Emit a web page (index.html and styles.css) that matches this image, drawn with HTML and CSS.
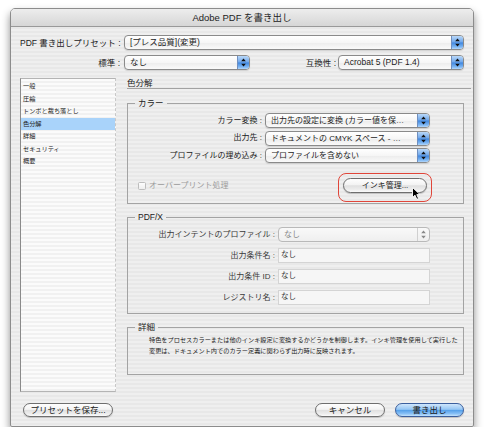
FILE: index.html
```html
<!DOCTYPE html>
<html lang="ja">
<head>
<meta charset="utf-8">
<title>Adobe PDF を書き出し</title>
<link rel="stylesheet" href="styles.css">
</head>
<body>
<div class="window">
  <div class="titlebar">Adobe PDF を書き出し</div>
  <div class="body">
    <div class="row top-row">
      <span class="lbl lbl-top">PDF 書き出しプリセット :</span>
      <div class="popup popup-wide"><span class="txt">[プレス品質](変更)</span><span class="cap"><svg width="5" height="9" viewBox="0 0 5 9"><path d="M2.5 0.5L4.8 3.3H0.2Z M2.5 8.5L4.8 5.7H0.2Z" fill="#111"/></svg></span></div>
    </div>
    <div class="row top-row row2">
      <span class="lbl lbl-top">標準 :</span>
      <div class="popup popup-short"><span class="txt">なし</span><span class="cap"><svg width="5" height="9" viewBox="0 0 5 9"><path d="M2.5 0.5L4.8 3.3H0.2Z M2.5 8.5L4.8 5.7H0.2Z" fill="#111"/></svg></span></div>
      <span class="lbl lbl-compat">互換性 :</span>
      <div class="popup popup-short"><span class="txt">Acrobat 5 (PDF 1.4)</span><span class="cap"><svg width="5" height="9" viewBox="0 0 5 9"><path d="M2.5 0.5L4.8 3.3H0.2Z M2.5 8.5L4.8 5.7H0.2Z" fill="#111"/></svg></span></div>
    </div>

    <div class="main">
      <ul class="sidelist">
        <li>一般</li>
        <li>圧縮</li>
        <li>トンボと裁ち落とし</li>
        <li class="selected">色分解</li>
        <li>詳細</li>
        <li>セキュリティ</li>
        <li>概要</li>
      </ul>

      <div class="panel">
        <div class="heading">色分解</div>

        <fieldset class="group">
          <legend>カラー</legend>
          <div class="group-body color-body">
            <div class="frow">
              <span class="flbl">カラー変換 :</span>
              <div class="popup popup-color"><span class="txt">出力先の設定に変換 (カラー値を保…</span><span class="cap"><svg width="5" height="9" viewBox="0 0 5 9"><path d="M2.5 0.5L4.8 3.3H0.2Z M2.5 8.5L4.8 5.7H0.2Z" fill="#111"/></svg></span></div>
            </div>
            <div class="frow">
              <span class="flbl">出力先 :</span>
              <div class="popup popup-color"><span class="txt">ドキュメントの CMYK スペース - …</span><span class="cap"><svg width="5" height="9" viewBox="0 0 5 9"><path d="M2.5 0.5L4.8 3.3H0.2Z M2.5 8.5L4.8 5.7H0.2Z" fill="#111"/></svg></span></div>
            </div>
            <div class="frow">
              <span class="flbl">プロファイルの埋め込み :</span>
              <div class="popup popup-color"><span class="txt">プロファイルを含めない</span><span class="cap"><svg width="5" height="9" viewBox="0 0 5 9"><path d="M2.5 0.5L4.8 3.3H0.2Z M2.5 8.5L4.8 5.7H0.2Z" fill="#111"/></svg></span></div>
            </div>
            <div class="optrow">
              <label class="check disabled"><span class="box"></span>オーバープリント処理</label>
              <div class="btn btn-ink">インキ管理...
                <span class="ring"></span>
                <svg class="cursor" width="9" height="13" viewBox="0 0 9 13"><path d="M0.5 0.5 L0.5 10.5 L3 8.2 L4.8 12.3 L6.5 11.5 L4.8 7.6 L8 7.6 Z" fill="#000" stroke="#fff" stroke-width="0.9" stroke-linejoin="round"/></svg>
              </div>
            </div>
          </div>
        </fieldset>

        <fieldset class="group">
          <legend>PDF/X</legend>
          <div class="group-body pdfx-body">
            <div class="frow">
              <span class="flbl">出力インテントのプロファイル :</span>
              <div class="popup popup-pdfx disabled"><span class="txt">なし</span><span class="cap"><svg width="5" height="9" viewBox="0 0 5 9"><path d="M2.5 0.5L4.8 3.3H0.2Z M2.5 8.5L4.8 5.7H0.2Z" fill="#8a8a8a"/></svg></span></div>
            </div>
            <div class="frow">
              <span class="flbl">出力条件名 :</span>
              <div class="field">なし</div>
            </div>
            <div class="frow">
              <span class="flbl">出力条件 ID :</span>
              <div class="field">なし</div>
            </div>
            <div class="frow">
              <span class="flbl">レジストリ名 :</span>
              <div class="field">なし</div>
            </div>
          </div>
        </fieldset>

        <fieldset class="group">
          <legend>詳細</legend>
          <p class="desc">特色をプロセスカラーまたは他のインキ設定に変換するかどうかを制御します。インキ管理を使用して実行した<br>変更は、ドキュメント内でのカラー定義に関わらず出力時に反映されます。</p>
        </fieldset>
      </div>
    </div>

    <div class="footer">
      <div class="btn btn-save">プリセットを保存...</div>
      <div class="spacer"></div>
      <div class="btn btn-cancel">キャンセル</div>
      <div class="btn btn-export">書き出し</div>
    </div>
  </div>
</div>
</body>
</html>
```

FILE: styles.css
```css
* { box-sizing: border-box; }

body {
  margin: 0;
  background: #ffffff;
  font-family: "Liberation Sans", "Noto Sans CJK JP", sans-serif;
  color: #1c1c1c;
}

.window {
  margin: 8px 0 0 10px;
  width: 464px;
  height: 419px;
  border: 1px solid #8c8c8c;
  border-radius: 5px 5px 2px 2px;
  box-shadow: 0 5px 9px rgba(0, 0, 0, 0.45);
  background: repeating-linear-gradient(#efefef 0 2px, #e8e8e8 2px 4px);
  display: flex;
  flex-direction: column;
  overflow: hidden;
}

.titlebar {
  height: 18px;
  border-bottom: 1px solid #999;
  background: linear-gradient(#ededed, #d6d6d6);
  text-align: center;
  font-size: 9.5px;
  line-height: 17px;
  color: #222;
}

.body {
  flex: 1;
  padding: 8px 9px 0 9px;
  display: flex;
  flex-direction: column;
}

.row {
  display: flex;
  align-items: center;
  height: 15px;
}
.row2 { margin-top: 5px; }

.lbl {
  font-size: 8.5px;
  line-height: 10px;
  white-space: nowrap;
}
.lbl-top {
  width: 100px;
  text-align: right;
  margin-right: 4px;
}
.lbl-compat {
  flex: 1;
  text-align: right;
  margin-right: 2px;
}

/* popup buttons */
.popup {
  display: flex;
  align-items: stretch;
  height: 15px;
  border: 1px solid #8a8a8a;
  border-radius: 4px;
  background: linear-gradient(#ffffff, #f6f6f6 50%, #ececec 52%, #fafafa);
  box-shadow: 0 1px 1px rgba(0, 0, 0, 0.12);
  overflow: hidden;
}
.popup .txt {
  flex: 1;
  padding-left: 5px;
  font-size: 8px;
  line-height: 13px;
  white-space: nowrap;
  overflow: hidden;
}
.popup-wide .txt, .popup-short .txt { font-size: 8.5px; }
.popup .cap {
  width: 12px;
  display: flex;
  align-items: center;
  justify-content: center;
  border-left: 1px solid #6f8fc0;
  background: linear-gradient(#b9d8f9, #6ea6ea 48%, #3f86df 52%, #7fb8f4 85%, #b2d6fb);
}
.popup-wide { flex: 1; }
.popup-short { width: 126px; }
.popup-color { width: 165px; }
.popup-pdfx { width: 152px; }
.popup.disabled {
  border-color: #b9b9b9;
  background: linear-gradient(#f9f9f9, #efefef);
  box-shadow: none;
}
.popup.disabled .txt { color: #888; }
.popup.disabled .cap {
  background: transparent;
  border-left: 1px solid #d0d0d0;
}

/* main area */
.main {
  margin-top: 8px;
  height: 314px;
  display: flex;
  gap: 11px;
}

.sidelist {
  width: 96px;
  margin: 0;
  padding: 1px 0 0 0;
  list-style: none;
  border: 1px solid #b4b4b4;
  border-left-color: #8a8a8a;
  border-right: 1px dashed #c8c8c8;
  background: repeating-linear-gradient(#fbfbfb 0 2px, #f1f1f1 2px 4px);
}
.sidelist li {
  height: 12.5px;
  line-height: 12.5px;
  padding-left: 2px;
  font-size: 6.2px;
  color: #222;
  white-space: nowrap;
}
.sidelist li.selected { background: #a9d3fa; }

.panel {
  flex: 1;
  display: flex;
  flex-direction: column;
}

.heading {
  height: 11px;
  border-bottom: 1px solid #a2a2a2;
  margin-right: -7px;
  font-size: 8.5px;
  line-height: 10px;
}

.group {
  margin: 0;
  padding: 0;
  min-width: 0;
  border: 1px solid #a3a3a3;
  margin-top: 8px;
}
.group:first-of-type { margin-top: 9px; }
.group legend {
  margin-left: 7px;
  padding: 0 3px;
  font-size: 8.5px;
  line-height: 10px;
  height: 10px;
  color: #222;
}

.group-body {
  display: flex;
  flex-direction: column;
  padding-right: 33px;
}
.color-body {
  padding-top: 5px;
  padding-bottom: 10px;
  gap: 2.5px;
}
.pdfx-body {
  padding-top: 5px;
  padding-bottom: 8px;
  gap: 6px;
}

.frow {
  display: flex;
  align-items: center;
  height: 15px;
}
.flbl {
  flex: 1;
  text-align: right;
  margin-right: 3px;
  font-size: 8px;
  line-height: 10px;
  white-space: nowrap;
  color: #222;
}
.pdfx-body .flbl { color: #3a3a3a; }

.field {
  width: 152px;
  height: 15px;
  border: 1px solid #d4d4d4;
  background: #f6f6f6;
  font-size: 7.5px;
  line-height: 10px;
  padding: 1px 2px;
  color: #333;
}

.optrow {
  display: flex;
  align-items: center;
  justify-content: space-between;
  height: 15px;
  margin-top: 12.5px;
  padding-left: 10px;
}
.check {
  display: flex;
  align-items: center;
  font-size: 8px;
  line-height: 10px;
}
.check.disabled { color: #9c9c9c; }
.check .box {
  width: 8px;
  height: 8px;
  border: 1px solid #bdbdbd;
  border-radius: 1.5px;
  background: linear-gradient(#fdfdfd, #eeeeee);
  margin-right: 3px;
}

/* buttons */
.btn {
  position: relative;
  height: 15px;
  border: 1px solid #6e6e6e;
  border-radius: 8px;
  background: linear-gradient(#fefefe, #f3f3f3 45%, #e0e0e0 52%, #ececec 80%, #fbfbfb);
  box-shadow: 0 1px 1px rgba(0, 0, 0, 0.2);
  font-size: 8.5px;
  line-height: 13px;
  text-align: center;
  white-space: nowrap;
  color: #1a1a1a;
}
.btn-ink { width: 84px; margin-right: 3px; font-size: 8px; }
.btn .ring {
  position: absolute;
  top: -6px;
  left: -6px;
  right: -6px;
  bottom: -10px;
  border: 1.5px solid #e0463a;
  border-radius: 8px;
}
.btn .cursor {
  position: absolute;
  left: 68px;
  top: 8px;
}

.desc {
  margin: 0;
  padding: 3px 5px 18px 21px;
  font-size: 6.2px;
  line-height: 10.5px;
  white-space: nowrap;
  color: #222;
}

.footer {
  margin-top: 11px;
  display: flex;
  align-items: center;
  padding-left: 3px;
}
.spacer { flex: 1; }
.btn-save { width: 90px; height: 14px; line-height: 12px; }
.btn-cancel { width: 70px; height: 14px; line-height: 12px; margin-right: 10px; }
.btn-export {
  width: 69px;
  height: 14px;
  line-height: 12px;
  border-color: #3b5f9e;
  background: linear-gradient(#cfe6fc, #95c6f4 45%, #55a0ea 52%, #86bff5 80%, #c3e2fd);
}
```
